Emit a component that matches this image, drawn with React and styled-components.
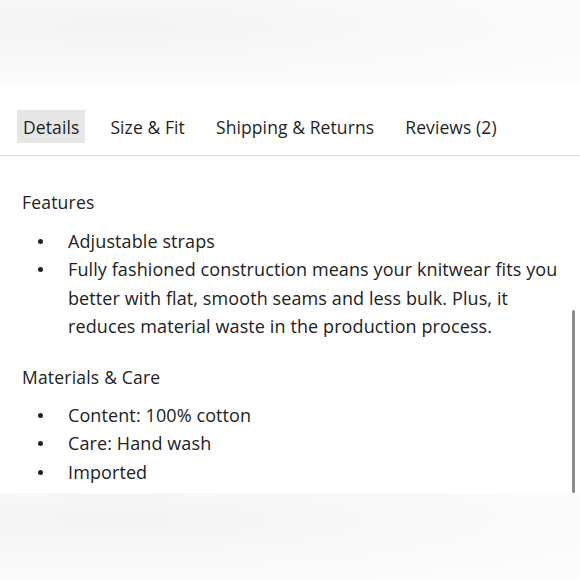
import styled, { createGlobalStyle } from "styled-components";

const Global = createGlobalStyle`
  html, body {
    margin: 0;
    padding: 0;
    background: #ffffff;
  }
  body {
    font-family: "Open Sans", "Liberation Sans", sans-serif;
    color: #222222;
  }
`;

const Page = styled.div`
  width: 580px;
  height: 580px;
  display: flex;
  flex-direction: column;
  overflow: hidden;
`;

const Band = styled.div`
  height: ${(p) => p.h}px;
  background: radial-gradient(ellipse at 20% 30%, #f3f3f3 0%, #f8f8f8 40%, #fdfdfd 100%);
`;

const Panel = styled.div`
  position: relative;
  height: 408px;
  background: #ffffff;
`;

const Tabs = styled.div`
  display: flex;
  align-items: flex-start;
  gap: 19px;
  padding: 25px 0 0 17px;
  height: 45px;
  border-bottom: 1px solid #dedede;
`;

const Tab = styled.div`
  height: 33px;
  display: flex;
  align-items: center;
  padding: 0 6px;
  font-size: 17.5px;
  letter-spacing: 0.1px;
  background: ${(p) => (p.active ? "#e6e6e6" : "transparent")};
  color: #1f1f1f;
`;

const Body = styled.div`
  padding: 34px 0 0 22px;
`;

const Heading = styled.div`
  font-size: 17.5px;
  line-height: 24px;
  letter-spacing: 0.2px;
  color: #222;
`;

const List = styled.ul`
  list-style: none;
  margin: ${(p) => p.mt}px 0 ${(p) => p.mb}px 0;
  padding: 0;
`;

const Item = styled.li`
  position: relative;
  padding-left: 46px;
  padding-right: 18px;
  font-size: 18px;
  line-height: 28.3px;
  letter-spacing: 0.1px;
  color: #222;

  &::before {
    content: "";
    position: absolute;
    left: 16px;
    top: 12px;
    width: 5px;
    height: 5px;
    border-radius: 50%;
    background: #222;
  }
`;

const Scrollbar = styled.div`
  position: absolute;
  right: 5px;
  top: 225px;
  width: 3px;
  height: 183px;
  border-radius: 2px;
  background: #8a8a8a;
`;

export default function App() {
  return (
    <Page>
      <Global />
      <Band h={85} />
      <Panel>
        <Tabs>
          <Tab active>Details</Tab>
          <Tab>Size &amp; Fit</Tab>
          <Tab>Shipping &amp; Returns</Tab>
          <Tab>Reviews (2)</Tab>
        </Tabs>
        <Body>
          <Heading>Features</Heading>
          <List mt={13} mb={25}>
            <Item>Adjustable straps</Item>
            <Item>
              Fully fashioned construction means your knitwear fits you better
              with flat, smooth seams and less bulk. Plus, it reduces material
              waste in the production process.
            </Item>
          </List>
          <Heading>Materials &amp; Care</Heading>
          <List mt={12} mb={0}>
            <Item>Content: 100% cotton</Item>
            <Item>Care: Hand wash</Item>
            <Item>Imported</Item>
          </List>
        </Body>
        <Scrollbar />
      </Panel>
      <Band h={87} />
    </Page>
  );
}
